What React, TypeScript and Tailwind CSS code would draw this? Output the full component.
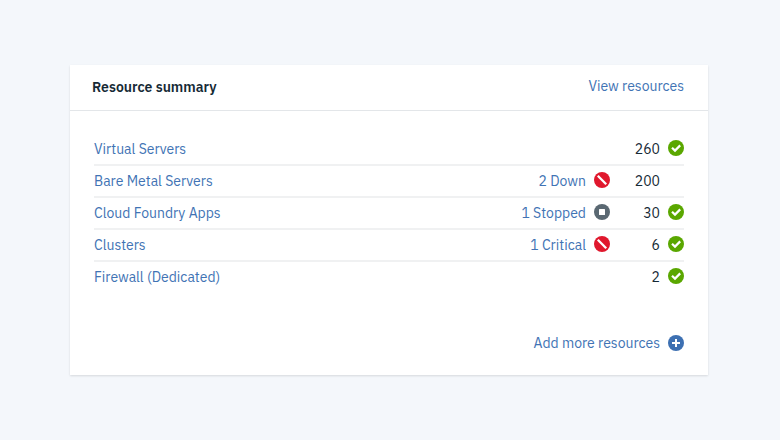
import React from "react";

type Status = "ok" | "down" | "stopped" | "add";

function StatusIcon({ kind }: { kind: Status }) {
  const fill = { ok: "#5aa700", down: "#e0182d", stopped: "#5a6872", add: "#3d70b2" }[kind];
  return (
    <svg className="block h-4 w-4 shrink-0" viewBox="0 0 16 16" fill="none">
      <circle cx="8" cy="8" r="8" fill={fill} />
      {kind === "ok" && <path d="M4 7.7 7 10.6 12.2 5.4" stroke="#fff" strokeWidth="2.2" />}
      {kind === "down" && <path d="M3.8 3.8 12.2 12.2" stroke="#fff" strokeWidth="2.3" />}
      {kind === "stopped" && <rect x="5" y="5" width="6" height="6" rx="0.5" fill="#fff" />}
      {kind === "add" && <path d="M8 4V12M4 8H12" stroke="#fff" strokeWidth="2" />}
    </svg>
  );
}

interface Resource {
  name: string;
  count: number;
  ok: boolean;
  issue?: { label: string; kind: Status };
}

const resources: Resource[] = [
  { name: "Virtual Servers", count: 260, ok: true },
  { name: "Bare Metal Servers", count: 200, ok: false, issue: { label: "2 Down", kind: "down" } },
  { name: "Cloud Foundry Apps", count: 30, ok: true, issue: { label: "1 Stopped", kind: "stopped" } },
  { name: "Clusters", count: 6, ok: true, issue: { label: "1 Critical", kind: "down" } },
  { name: "Firewall (Dedicated)", count: 2, ok: true },
];

export default function App() {
  return (
    <div className="flex h-[440px] w-[780px] justify-center bg-[#f4f7fb] pt-[65px] pr-[2px] font-['IBM_Plex_Sans',Roboto,sans-serif] text-[14px] text-[#4173b4]">
      <section className="flex h-[310px] w-[638px] flex-col bg-white shadow-[0_1px_2px_rgba(0,0,0,0.12)]">
        <header className="flex h-[46px] items-center justify-between border-b border-[#e3e6e9] pr-6 pl-[22px]">
          <h2 className="pb-px leading-5 font-semibold text-[#152935]">Resource summary</h2>
          <a className="pb-[3px] leading-5">View resources</a>
        </header>
        <ul className="mx-6 mt-[23px]">
          {resources.map((r) => (
            <li key={r.name} className="flex h-8 items-center border-b-2 border-[#f0f1f2] leading-[30px] last:border-transparent">
              <a className="mr-auto">{r.name}</a>
              {r.issue && (
                <div className="flex items-center gap-2">
                  <a>{r.issue.label}</a>
                  <div className="pb-[2px]"><StatusIcon kind={r.issue.kind} /></div>
                </div>
              )}
              <span className="w-[50px] text-right text-[#152935]">{r.count}</span>
              <div className="ml-2 w-4 pb-[2px]">{r.ok && <StatusIcon kind="ok" />}</div>
            </li>
          ))}
        </ul>
        <footer className="mt-auto mr-6 mb-[22px] flex h-5 items-center justify-end gap-2">
          <a className="leading-5">Add more resources</a>
          <StatusIcon kind="add" />
        </footer>
      </section>
    </div>
  );
}
